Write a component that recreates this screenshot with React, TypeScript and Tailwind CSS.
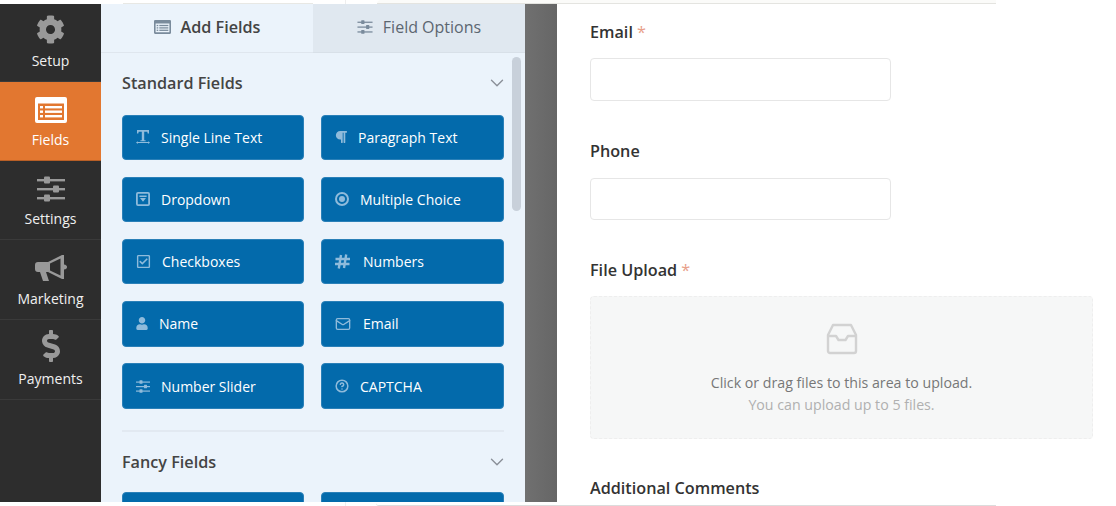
import React from 'react';
import { ChevronDown, Mail, CircleHelp } from 'lucide-react';
import { FaCog, FaUser, FaParagraph, FaDollarSign, FaRegCheckSquare } from 'react-icons/fa';

const FieldsIcon = ({ className }: { className?: string }) => (
  <svg viewBox="0 0 32 26" className={className} fill="currentColor">
    <path fillRule="evenodd" d="M2 0h28a2 2 0 0 1 2 2v22a2 2 0 0 1-2 2H2a2 2 0 0 1-2-2V2a2 2 0 0 1 2-2zm1 6.5V23h26V6.5H3z" />
    <rect x="5" y="9" width="3" height="2.4" />
    <rect x="5" y="13.5" width="3" height="2.4" />
    <rect x="5" y="18" width="3" height="2.4" />
    <rect x="10" y="9" width="17" height="2.4" />
    <rect x="10" y="13.5" width="17" height="2.4" />
    <rect x="10" y="18" width="17" height="2.4" />
  </svg>
);

const SlidersIcon = ({ className }: { className?: string }) => (
  <svg viewBox="0 0 28 26" className={className} fill="currentColor">
    <rect x="0" y="3" width="28" height="2.4" />
    <rect x="7" y="0.5" width="6" height="7" rx="1" />
    <rect x="0" y="12" width="28" height="2.4" />
    <rect x="16" y="9.5" width="6" height="7" rx="1" />
    <rect x="0" y="21" width="28" height="2.4" />
    <rect x="7" y="18.5" width="6" height="7" rx="1" />
  </svg>
);

const BullhornIcon = ({ className }: { className?: string }) => (
  <svg viewBox="0 0 32 28" className={className} fill="currentColor">
    <path
      fillRule="evenodd"
      d="M3 8H13L27 1H29V25H27L13 18H11L14 27H8L5 18H3Q0 18 0 15V11Q0 8 3 8ZM15 9.5V16.5L25.5 21.5V4.5Z"
    />
    <path d="M29 10.5Q32 11 32 13Q32 15 29 15.5Z" />
  </svg>
);

const TextIcon = ({ className }: { className?: string }) => (
  <svg viewBox="0 0 14 14" className={className} fill="currentColor">
    <path d="M1 0h12v3.6h-1.3L11.3 1.7H8.2v8.5h1.4v1.1H4.4v-1.1h1.4V1.7H2.7L2.3 3.6H1z" />
    <path d="M0 12.6l1.8-1.3v.8h10.4v-.8l1.8 1.3-1.8 1.3v-.8H1.8v.8z" />
  </svg>
);

const DropdownIcon = ({ className }: { className?: string }) => (
  <svg viewBox="0 0 14 14" className={className} fill="currentColor">
    <path fillRule="evenodd" d="M2 0h10a2 2 0 0 1 2 2v10a2 2 0 0 1-2 2H2a2 2 0 0 1-2-2V2a2 2 0 0 1 2-2zm0 1.8a.3.3 0 0 0-.2.2v10c0 .1.1.2.2.2h10c.1 0 .2-.1.2-.2V2a.3.3 0 0 0-.2-.2H2z" />
    <path d="M3.4 3.6h7.2v1.5H3.4zM4 6h6L7 9.8z" />
  </svg>
);

const RadioIcon = ({ className }: { className?: string }) => (
  <svg viewBox="0 0 14 14" className={className} fill="none" stroke="currentColor" strokeWidth="2">
    <circle cx="7" cy="7" r="6" />
    <circle cx="7" cy="7" r="3" fill="currentColor" stroke="none" />
  </svg>
);

const HashIcon = ({ className }: { className?: string }) => (
  <svg viewBox="0 0 15 15" className={className} fill="none" stroke="currentColor" strokeWidth="2.4">
    <path d="M0.5 5H15M0 10H14.5M6 1L3.8 14.5M11.2 .5L9 14" />
  </svg>
);

const InboxIcon = ({ className }: { className?: string }) => (
  <svg viewBox="0 0 32 32" className={className} fill="none" stroke="currentColor" strokeWidth="2.4" strokeLinejoin="round">
    <path d="M7 2h18l5 10v16a2 2 0 0 1-2 2H4a2 2 0 0 1-2-2V12z" />
    <path d="M2 13h8l2.5 4h7l2.5-4h8" />
  </svg>
);

const navItems = [
  { label: 'Setup', h: 'h-[78px]', icon: <FaCog className="w-[29px] h-[29px]" /> },
  { label: 'Fields', h: 'h-[79px]', icon: <FieldsIcon className="w-[32px] h-[26px] text-white" />, active: true },
  { label: 'Settings', h: 'h-[79px]', icon: <SlidersIcon className="w-[28px] h-[26px]" /> },
  { label: 'Marketing', h: 'h-[80px]', icon: <BullhornIcon className="w-[32px] h-[28px]" /> },
  { label: 'Payments', h: 'h-[80px]', icon: <FaDollarSign className="w-[18px] h-[32px]" /> },
];

const standardFields = [
  { label: 'Single Line Text', icon: <TextIcon className="w-[14px] h-[14px]" />, gap: 'gap-[11px]' },
  { label: 'Paragraph Text', icon: <FaParagraph className="w-[12px] h-[14px]" />, gap: 'gap-[11px]' },
  { label: 'Dropdown', icon: <DropdownIcon className="w-[14px] h-[14px]" />, gap: 'gap-[11px]' },
  { label: 'Multiple Choice', icon: <RadioIcon className="w-[14px] h-[14px]" />, gap: 'gap-[11px]' },
  { label: 'Checkboxes', icon: <FaRegCheckSquare className="w-[15px] h-[15px]" />, gap: 'gap-[11px]' },
  { label: 'Numbers', icon: <HashIcon className="w-[15px] h-[15px]" />, gap: 'gap-[13px]' },
  { label: 'Name', icon: <FaUser className="w-[12px] h-[13px]" />, gap: 'gap-[11px]' },
  { label: 'Email', icon: <Mail className="w-[16px] h-[16px]" />, gap: 'gap-[12px]' },
  { label: 'Number Slider', icon: <SlidersIcon className="w-[14px] h-[13px]" />, gap: 'gap-[11px]' },
  { label: 'CAPTCHA', icon: <CircleHelp className="w-[14px] h-[14px]" strokeWidth={2.6} />, gap: 'gap-[11px]' },
];

const FieldButton = ({ label, icon, gap }: { label?: string; icon?: React.ReactNode; gap?: string }) => (
  <div className={`h-[45.5px] shrink-0 bg-[#036aab] border border-[#2a80b8] rounded-[4px] flex items-center pl-[13px] ${gap} text-white text-[14px]`}>
    <span className="text-[#8fbbdb] flex items-center justify-center">{icon}</span>
    <span>{label}</span>
  </div>
);

const Label = ({ text, required }: { text: string; required?: boolean }) => (
  <div className="text-[#333333] text-[16.2px] font-[560] leading-[22px]">
    {text}
    {required && <span className="text-[#e8a08a] font-normal ml-[4px]">*</span>}
  </div>
);

export default function App() {
  return (
    <div className="w-[1116px] h-[506px] bg-white overflow-hidden flex flex-col font-['Open_Sans',sans-serif]">
      <div className="h-[4px] shrink-0 flex">
        <div className="w-[123px]" />
        <div className="w-[190px] border-b border-[#e8e8e4] rounded-t-[3px]" />
        <div className="w-[33px] border-r border-[#eeeeee]" />
        <div className="w-[31px]" />
        <div className="w-[619px] border-b border-[#e4e4e0] bg-[#fbfbf9] rounded-tl-[4px]" />
      </div>
      <div className="h-[498px] shrink-0 flex">
        <nav className="w-[101px] shrink-0 bg-[#2d2d2d] flex flex-col">
          {navItems.map((item) => (
            <div
              key={item.label}
              className={`${item.h} shrink-0 flex flex-col items-center justify-end pb-[10px] gap-[6px] border-b text-[14px] ${
                item.active ? 'bg-[#e27730] border-[#b85f26] text-white' : 'border-[#3a3a3a] text-[#f0f0f0]'
              }`}
            >
              <span className={item.active ? 'text-white' : 'text-[#999999]'}>{item.icon}</span>
              <span>{item.label}</span>
            </div>
          ))}
        </nav>

        <aside className="w-[424px] shrink-0 bg-[#ebf3fb] flex flex-col overflow-hidden relative">
          <div className="h-[49px] shrink-0 flex">
            <div className="w-[212px] pb-[2px] flex items-center justify-center gap-[10px] border-b border-[#dfe6ee] text-[#444444] text-[16.2px] font-[560]">
              <FieldsIcon className="w-[17px] h-[14px] text-[#7a8b9c]" />
              Add Fields
            </div>
            <div className="w-[212px] pb-[2px] flex items-center justify-center gap-[10px] bg-[#e0e8f0] border-b border-[#d8e0e8] text-[#5c6670] text-[16px]">
              <SlidersIcon className="w-[16px] h-[14px] text-[#7a8b9c]" />
              Field Options
            </div>
          </div>

          <div className="pl-[21px] pr-[21px] flex flex-col">
            <div className="flex items-center justify-between h-[61.5px] pb-[1px] shrink-0 text-[#444444] text-[16.2px] font-[560]">
              Standard Fields
              <ChevronDown className="w-[22px] h-[22px] -mr-[4px] text-[#8a8f98]" strokeWidth={1.5} />
            </div>
            <div className="grid grid-cols-[182px_183px] gap-x-[17px] gap-y-[16.7px]">
              {standardFields.map((f) => (
                <FieldButton key={f.label} {...f} />
              ))}
            </div>
            <div className="h-[2px] shrink-0 bg-[#e2e9f1] mt-[21.5px]" />
            <div className="flex items-center justify-between h-[60px] shrink-0 text-[#444444] text-[16.2px] font-[560]">
              Fancy Fields
              <ChevronDown className="w-[22px] h-[22px] -mr-[4px] text-[#8a8f98]" strokeWidth={1.5} />
            </div>
            <div className="grid grid-cols-[182px_183px] gap-x-[17px]">
              <FieldButton />
              <FieldButton />
            </div>
          </div>

          <div className="absolute right-[4px] top-[53px] w-[9px] h-[154px] rounded-full bg-[#c8d0da]" />
        </aside>

        <div className="w-[32px] shrink-0 bg-gradient-to-r from-[#707070] to-[#666666]" />

        <main className="flex-1 pl-[33px] pt-[17px] flex flex-col">
          <Label text="Email" required />
          <div className="w-[301px] h-[43px] mt-[15px] border border-[#e6e6e6] rounded-[4px]" />
          <div className="mt-[39px]"><Label text="Phone" /></div>
          <div className="w-[301px] h-[42px] mt-[16px] border border-[#e6e6e6] rounded-[4px]" />
          <div className="mt-[39px]"><Label text="File Upload" required /></div>
          <div className="w-[503px] h-[143px] mt-[15px] bg-[#f6f7f7] border border-dashed border-[#eeeeee] rounded-[4px] flex flex-col items-center pt-[26px]">
            <InboxIcon className="w-[32px] h-[32px] text-[#d2d2d2]" />
            <div className="mt-[17px] text-[14.2px] leading-[22px] text-[#777777]">Click or drag files to this area to upload.</div>
            <div className="text-[14.2px] leading-[22px] text-[#b0b0b0]">You can upload up to 5 files.</div>
          </div>
          <div className="mt-[38px]"><Label text="Additional Comments" /></div>
        </main>
      </div>
      <div className="h-[4px] shrink-0 flex">
        <div className="w-[346px] border-r border-[#eeeeee]" />
        <div className="w-[30px]" />
        <div className="w-[620px] h-[3px] mt-[1px] border-b border-[#dcdcdc] rounded-bl-[4px]" />
      </div>
    </div>
  );
}
